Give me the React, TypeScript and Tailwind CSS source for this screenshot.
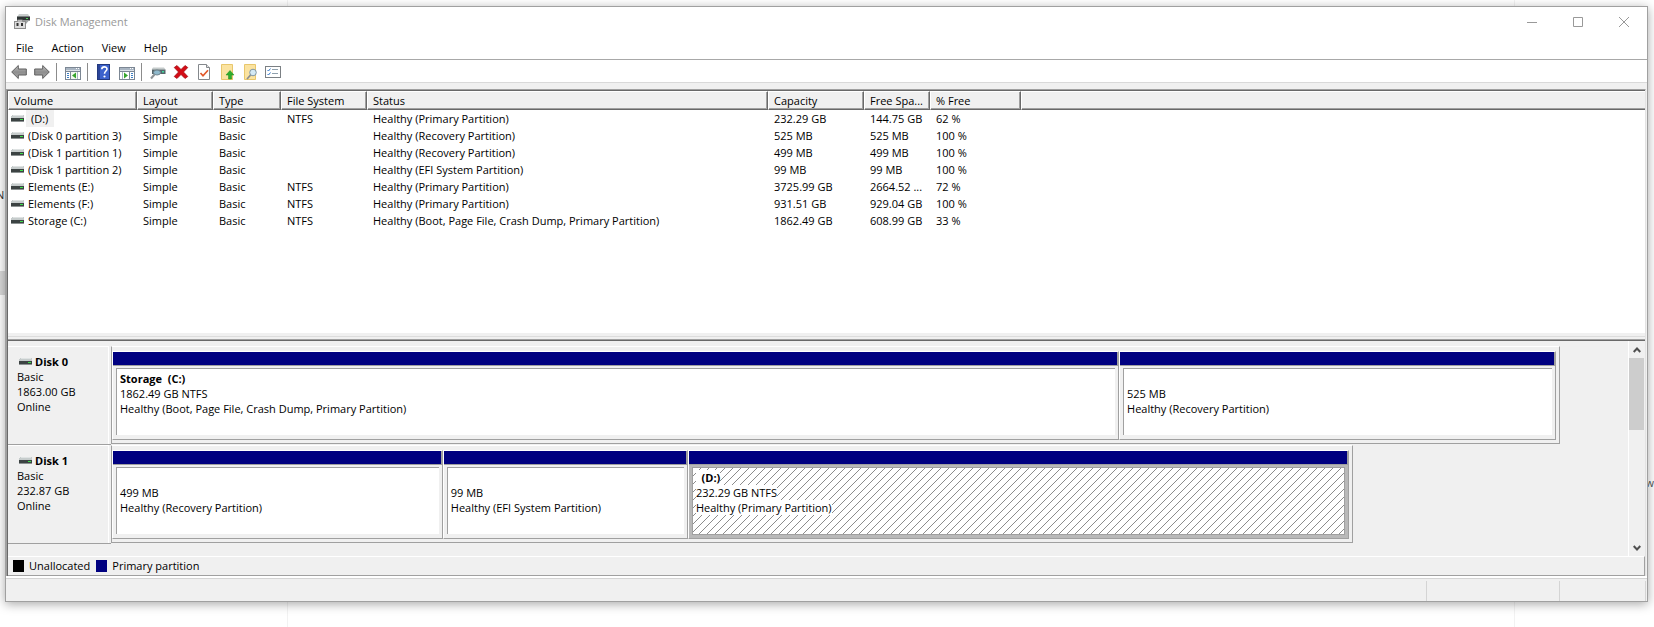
import type { ReactNode } from 'react';

type Volume = {
  name: string;
  layout: string;
  type: string;
  fs: string;
  status: string;
  capacity: string;
  free: string;
  percent: string;
  selected?: boolean;
};

type Partition = {
  id: string;
  label?: string;
  size: string;
  status: string;
  weight: number;
  selected?: boolean;
};

type Disk = {
  name: string;
  type: string;
  size: string;
  state: string;
  width: number;
  partitions: Partition[];
};

const menus = ['File', 'Action', 'View', 'Help'];

const columns: { label: string; className: string }[] = [
  { label: 'Volume', className: 'w-[129px]' },
  { label: 'Layout', className: 'w-[76px]' },
  { label: 'Type', className: 'w-[68px]' },
  { label: 'File System', className: 'w-[86px]' },
  { label: 'Status', className: 'w-[401px]' },
  { label: 'Capacity', className: 'w-[96px]' },
  { label: 'Free Spa...', className: 'w-[66px]' },
  { label: '% Free', className: 'w-[91px]' },
];

const volumes: Volume[] = [
  { name: '(D:)', layout: 'Simple', type: 'Basic', fs: 'NTFS', status: 'Healthy (Primary Partition)', capacity: '232.29 GB', free: '144.75 GB', percent: '62 %', selected: true },
  { name: '(Disk 0 partition 3)', layout: 'Simple', type: 'Basic', fs: '', status: 'Healthy (Recovery Partition)', capacity: '525 MB', free: '525 MB', percent: '100 %' },
  { name: '(Disk 1 partition 1)', layout: 'Simple', type: 'Basic', fs: '', status: 'Healthy (Recovery Partition)', capacity: '499 MB', free: '499 MB', percent: '100 %' },
  { name: '(Disk 1 partition 2)', layout: 'Simple', type: 'Basic', fs: '', status: 'Healthy (EFI System Partition)', capacity: '99 MB', free: '99 MB', percent: '100 %' },
  { name: 'Elements (E:)', layout: 'Simple', type: 'Basic', fs: 'NTFS', status: 'Healthy (Primary Partition)', capacity: '3725.99 GB', free: '2664.52 ...', percent: '72 %' },
  { name: 'Elements (F:)', layout: 'Simple', type: 'Basic', fs: 'NTFS', status: 'Healthy (Primary Partition)', capacity: '931.51 GB', free: '929.04 GB', percent: '100 %' },
  { name: 'Storage (C:)', layout: 'Simple', type: 'Basic', fs: 'NTFS', status: 'Healthy (Boot, Page File, Crash Dump, Primary Partition)', capacity: '1862.49 GB', free: '608.99 GB', percent: '33 %' },
];

const disks: Disk[] = [
  {
    name: 'Disk 0',
    type: 'Basic',
    size: '1863.00 GB',
    state: 'Online',
    width: 95.5,
    partitions: [
      { id: 'd0p2', label: 'Storage  (C:)', size: '1862.49 GB NTFS', status: 'Healthy (Boot, Page File, Crash Dump, Primary Partition)', weight: 1008 },
      { id: 'd0p3', size: '525 MB', status: 'Healthy (Recovery Partition)', weight: 436 },
    ],
  },
  {
    name: 'Disk 1',
    type: 'Basic',
    size: '232.87 GB',
    state: 'Online',
    width: 81.9,
    partitions: [
      { id: 'd1p1', size: '499 MB', status: 'Healthy (Recovery Partition)', weight: 330 },
      { id: 'd1p2', size: '99 MB', status: 'Healthy (EFI System Partition)', weight: 244 },
      { id: 'd1p3', label: '  (D:)', size: '232.29 GB NTFS', status: 'Healthy (Primary Partition)', weight: 662, selected: true },
    ],
  },
];

function DriveIcon() {
  return (
    <svg width="14" height="9" viewBox="0 0 14 9" className="shrink-0" aria-hidden="true" shapeRendering="crispEdges">
      <path d="M1 1h12v3H0V2h1z" fill="#c6cccc" />
      <rect x="2" y="1" width="10" height="1" fill="#dfe3e3" />
      <rect x="0" y="4" width="13" height="3" fill="#3c4343" />
      <rect x="0" y="7" width="13" height="1" fill="#8c9292" />
      <rect x="9" y="5" width="3" height="1" fill="#3ee04a" />
    </svg>
  );
}

function AppIcon() {
  return (
    <svg width="16" height="16" viewBox="0 0 16 16" aria-hidden="true">
      <path d="M5 0h9l2 3H3z" fill="#c9cdcd" />
      <rect x="3" y="2.500" width="13" height="4" fill="#2f3535" />
      <rect x="12" y="4" width="2" height="1" fill="#4fd05a" />
      <path d="M12 6.500h3L12 10z" fill="#a2a6a6" />
      <rect x="0.500" y="7.500" width="11" height="7" fill="#dcdcdc" stroke="#8d8d8d" />
      <path d="M3.500 7.500v-1.500h5v1.500" fill="#e4e4e4" stroke="#8d8d8d" />
      <rect x="2.500" y="9" width="2" height="3" fill="#333" />
      <rect x="7" y="9" width="2" height="3" fill="#333" />
    </svg>
  );
}

function BackIcon() {
  return (
    <svg width="16" height="16" viewBox="0 0 16 16" aria-hidden="true">
      <defs>
        <linearGradient id="arrow" x1="0" y1="0" x2="0" y2="1">
          <stop offset="0" stopColor="#c2c2c2" />
          <stop offset="0.5" stopColor="#8e8e8e" />
          <stop offset="1" stopColor="#a8a8a8" />
        </linearGradient>
      </defs>
      <path d="M0.700 8L7.300 1.500v3.500h8v6h-8v3.500z" fill="url(#arrow)" stroke="#5e5e5e" strokeLinejoin="round" />
    </svg>
  );
}

function ForwardIcon() {
  return (
    <svg width="16" height="16" viewBox="0 0 16 16" aria-hidden="true">
      <path d="M15.300 8L8.700 1.500v3.500h-8v6h8v3.500z" fill="url(#arrow)" stroke="#5e5e5e" strokeLinejoin="round" />
    </svg>
  );
}

// Window with a side pane; the green arrow points to the pane it toggles.
function PaneIcon({ side }: { side: 'left' | 'right' }) {
  return (
    <svg width="16" height="16" viewBox="0 0 16 16" aria-hidden="true" shapeRendering="crispEdges">
      <rect x="0.500" y="3.500" width="15" height="12" fill="#fff" stroke="#7c8794" />
      <rect x="1" y="4" width="14" height="2" fill="#a9b5c2" />
      <rect x="11" y="4" width="1" height="1" fill="#fff" />
      <rect x="13" y="4" width="1" height="1" fill="#fff" />
      <rect x="1" y="6" width="14" height="1" fill="#dde2e8" />
      <rect x="1" y="7" width="14" height="1" fill="#7c8794" />
      {side === 'left' ? (
        <>
          <rect x="5" y="8" width="1" height="7" fill="#7c8794" />
          <path d="M2 9h2v1H2zM2 11h2v1H2zM2 13h2v1H2z" fill="#3d7fc4" />
          <rect x="6" y="8" width="6" height="7" fill="#f3faf0" />
          <rect x="12" y="8" width="1" height="7" fill="#a9b5c2" />
          <path d="M11 8.500v6L7 11.500z" fill="#35a52c" shapeRendering="auto" />
        </>
      ) : (
        <>
          <rect x="10" y="8" width="1" height="7" fill="#7c8794" />
          <path d="M12 9h2v1h-2zM12 11h2v1h-2zM12 13h2v1h-2z" fill="#3d7fc4" />
          <rect x="3" y="8" width="1" height="7" fill="#a9b5c2" />
          <path d="M5 8.500v6l4-3z" fill="#35a52c" shapeRendering="auto" />
        </>
      )}
    </svg>
  );
}

function HelpIcon() {
  return (
    <svg width="16" height="16" viewBox="0 0 16 16" aria-hidden="true">
      <rect x="1.500" y="0.500" width="12" height="15" fill="#3c62cc" stroke="#23397f" />
      <rect x="2" y="1" width="2" height="14" fill="#2b4499" />
      <path d="M5.800 5.300C5.800 2 11 2.200 11 5c0 2-2.500 2.200-2.500 4.800" fill="none" stroke="#fff" strokeWidth="1.600" />
      <circle cx="8.500" cy="12.500" r="1.100" fill="#fff" />
    </svg>
  );
}

function RescanIcon() {
  return (
    <svg width="16" height="16" viewBox="0 0 16 16" aria-hidden="true">
      <path d="M3 3.500h11l1.500 2h-14z" fill="#c6cccc" />
      <rect x="2" y="5.500" width="13.500" height="4.500" fill="#56666b" />
      <rect x="12" y="7" width="2" height="1.500" fill="#41d9a0" />
      <path d="M1 14.500l3.500-4" stroke="#8e9396" strokeWidth="2" />
      <ellipse cx="7" cy="8.500" rx="3.500" ry="2.500" fill="#8fb9cc" stroke="#73868f" />
    </svg>
  );
}

function DeleteIcon() {
  return (
    <svg width="16" height="16" viewBox="0 0 16 16" aria-hidden="true">
      <path d="M4 1.500L8 5.500l4-4 2.800 2L10.500 8l4.300 4.500-2.800 2L8 10.500l-4 4-2.800-2L5.500 8 1.200 3.500z" fill="#d40c16" stroke="#9c0810" strokeWidth="0.700" />
    </svg>
  );
}

function PropertiesIcon() {
  return (
    <svg width="16" height="16" viewBox="0 0 16 16" aria-hidden="true">
      <path d="M2.500 0.500h8l3 3v12h-11z" fill="#fff" stroke="#84888c" />
      <path d="M10.500 0.500v3h3" fill="#e3e3e3" stroke="#84888c" />
      <path d="M4.500 9l2.500 2.800 5-5.500" fill="none" stroke="#e2592b" strokeWidth="1.700" />
    </svg>
  );
}

function FolderUpIcon() {
  return (
    <svg width="16" height="16" viewBox="0 0 16 16" aria-hidden="true">
      <path d="M2.500 0.500h11v15h-11z" fill="#fbe3a0" stroke="#e8c76c" />
      <path d="M11 13.500h3v2h-3z" fill="#e8c766" />
      <path d="M11 6.500l4 4.500h-2.500v4h-3v-4H7z" fill="#2fae2c" stroke="#1f8a1f" strokeWidth="0.500" />
    </svg>
  );
}

function FolderSearchIcon() {
  return (
    <svg width="16" height="16" viewBox="0 0 16 16" aria-hidden="true">
      <path d="M2.500 0.500h11v15h-11z" fill="#fbe3a0" stroke="#e8c76c" />
      <path d="M5 15l4-4.500" stroke="#8c8f91" strokeWidth="1.800" />
      <circle cx="11" cy="8.500" r="3.300" fill="#d3e9f5" stroke="#8196a3" />
    </svg>
  );
}

function SettingsIcon() {
  return (
    <svg width="16" height="16" viewBox="0 0 16 16" aria-hidden="true">
      <rect x="0.500" y="2.500" width="15" height="11" fill="#fff" stroke="#7b8084" />
      <path d="M2.500 6l1 1 2-2.500M2.500 10l1 1 2-2.500" fill="none" stroke="#3477c9" />
      <path d="M7 5.500h6M7 9.500h6" stroke="#8fa0ad" />
    </svg>
  );
}

function ToolButton({ label, children }: { label: string; children: ReactNode }) {
  return (
    <button type="button" aria-label={label} className="flex h-5 w-[23px] shrink-0 items-center pl-[3px]">
      {children}
    </button>
  );
}

function ToolSeparator() {
  return <span className="mr-[5px] ml-0.5 h-[18px] w-px shrink-0 bg-[#8c8c8c]"></span>;
}

function TitleBar() {
  return (
    <header className="flex h-[30px] items-center bg-white pl-2">
      <AppIcon />
      <h1 className="ml-[5px] flex-1 leading-4 text-[#999999]">Disk Management</h1>
      <button type="button" aria-label="Minimize" className="flex h-7 w-[46px] items-center justify-center">
        <svg width="10" height="10" viewBox="0 0 10 10">
          <path d="M0 5.500h10" stroke="#999" />
        </svg>
      </button>
      <button type="button" aria-label="Maximize" className="flex h-7 w-[46px] items-center justify-center">
        <svg width="10" height="10" viewBox="0 0 10 10">
          <path d="M0.500 0.500h9v9h-9z" fill="none" stroke="#999" />
        </svg>
      </button>
      <button type="button" aria-label="Close" className="flex h-7 w-[46px] items-center justify-center">
        <svg width="10" height="10" viewBox="0 0 10 10">
          <path d="M0 0l10 10M10 0L0 10" stroke="#999" />
        </svg>
      </button>
    </header>
  );
}

function VolumeTable() {
  return (
    <table className="w-full table-fixed border-separate border-spacing-0 text-left">
      <thead>
        <tr>
          {columns.map((col) => (
            <th
              key={col.label}
              scope="col"
              className={`${col.className} h-[19px] truncate border border-t-white border-r-[#696969] border-b-[#696969] border-l-white bg-[#f0f0f0] pl-[5px] text-left leading-4 font-normal shadow-[inset_-1px_-1px_0_#a0a0a0]`}
            >
              {col.label}
            </th>
          ))}
          <td className="h-[19px] border-t border-b border-l border-t-white border-b-[#696969] border-l-white bg-[#f0f0f0] shadow-[inset_0_-1px_0_#a0a0a0]"></td>
        </tr>
      </thead>
      <tbody>
        {volumes.map((v) => (
          <tr key={v.name} className="h-[17px] leading-[17px] whitespace-nowrap">
            <td>
              <div className="flex items-center pl-[3px]">
                <DriveIcon />
                <span className={v.selected ? 'ml-px bg-[#f0f0f0] pr-1.5 pl-[5px]' : 'pl-[3px]'}>{v.name}</span>
              </div>
            </td>
            <td className="pl-1.5">{v.layout}</td>
            <td className="pl-1.5">{v.type}</td>
            <td className="pl-1.5">{v.fs}</td>
            <td className="pl-1.5">{v.status}</td>
            <td className="pl-1.5">{v.capacity}</td>
            <td className="pl-1.5">{v.free}</td>
            <td className="pl-1.5">{v.percent}</td>
            <td></td>
          </tr>
        ))}
      </tbody>
    </table>
  );
}

function Hatch() {
  return (
    <svg className="absolute inset-0 h-full w-full" aria-hidden="true">
      <defs>
        <pattern id="hatch" width="8" height="8" patternUnits="userSpaceOnUse">
          <path
            d="M0 7h1v1H0zM1 6h1v1H1zM2 5h1v1H2zM3 4h1v1H3zM4 3h1v1H4zM5 2h1v1H5zM6 1h1v1H6zM7 0h1v1H7z"
            fill="#8c8c8c"
            shapeRendering="crispEdges"
          />
        </pattern>
      </defs>
      <rect width="100%" height="100%" fill="url(#hatch)" />
    </svg>
  );
}

function PartitionBox({ partition }: { partition: Partition }) {
  const { label, size, status, selected } = partition;

  return (
    <div
      className="flex min-w-0 basis-0 flex-col border border-t-white border-r-[#a0a0a0] border-b-[#a0a0a0] border-l-white"
      style={{ flexGrow: partition.weight }}
    >
      <div className="h-3.5 border-r border-b border-[#a0a0a0] bg-[#000080]"></div>
      <div className={`flex flex-1 px-[3px] pt-0.5 ${selected ? 'bg-[#b9b9b9] pb-[3px]' : 'pb-1'}`}>
        <div
          className={`relative flex-1 overflow-hidden border-[#a0a0a0] bg-white pt-0.5 pl-[3px] leading-[15px] ${
            selected ? 'border' : 'border-t border-l'
          }`}
        >
          {selected && <Hatch />}
          <div className="relative flex flex-col items-start whitespace-pre">
            <strong className="h-[15px] bg-white font-bold">{label}</strong>
            <span className="bg-white">{size}</span>
            <span className="bg-white">{status}</span>
          </div>
        </div>
      </div>
    </div>
  );
}

function DiskRow({ disk }: { disk: Disk }) {
  return (
    <section className="flex h-[99px]" aria-label={disk.name}>
      <div className="w-[103px] shrink-0 border-b border-[#a0a0a0]">
        <div className="h-full w-[101px] border-t border-r border-white pt-[7px] pl-[9px] leading-[15px]">
          <div className="flex items-center gap-0.5 pl-0.5">
            <DriveIcon />
            <strong className="font-bold">{disk.name}</strong>
          </div>
          <p>{disk.type}</p>
          <p>{disk.size}</p>
          <p>{disk.state}</p>
        </div>
      </div>
      <div className="min-w-0 flex-1">
        <div
          className="flex h-[98px] border border-t-white border-r-[#a0a0a0] border-b-[#a0a0a0] border-l-[#a0a0a0] pt-1 pr-[3px] pb-[3px]"
          style={{ width: `${disk.width}%` }}
        >
          {disk.partitions.map((p) => (
            <PartitionBox key={p.id} partition={p} />
          ))}
        </div>
      </div>
    </section>
  );
}

function ScrollBar() {
  return (
    <div className="flex w-[17px] shrink-0 flex-col border-l border-white bg-[#f0f0f0]">
      <button type="button" aria-label="Scroll up" className="flex h-[17px] items-center justify-center">
        <svg width="8" height="6" viewBox="0 0 8 6">
          <path d="M0.700 5L4 1.500 7.300 5" fill="none" stroke="#505050" strokeWidth="2" />
        </svg>
      </button>
      <div className="h-[72px] w-[15px] bg-[#cdcdcd]"></div>
      <div className="flex-1"></div>
      <button type="button" aria-label="Scroll down" className="flex h-[17px] items-center justify-center">
        <svg width="8" height="6" viewBox="0 0 8 6">
          <path d="M0.700 1L4 4.500 7.300 1" fill="none" stroke="#505050" strokeWidth="2" />
        </svg>
      </button>
    </div>
  );
}

export default function App() {
  return (
    <div className="relative flex h-screen min-h-[520px] flex-col overflow-hidden bg-white pt-1.5 pr-1.5 pb-[25px] pl-[5px] font-['Open_Sans','Noto_Sans',sans-serif] text-[11px] text-black">
      {/* Whatever is open behind the window */}
      <div className="absolute inset-0" aria-hidden="true">
        <div className="absolute inset-y-0 left-[287px] w-px bg-[#f2f2f2]"></div>
        <div className="absolute inset-y-0 right-[139px] w-px bg-[#f2f2f2]"></div>
        <div className="absolute top-[271px] left-0 h-6 w-[5px] bg-[#dadada]"></div>
        <span className="absolute top-[187px] -left-1 leading-4 text-[#333333]">N</span>
        <span className="absolute top-[475px] right-0 leading-4 text-[#555555]">w</span>
      </div>

      <main className="relative flex flex-1 flex-col border border-[#a0a0a0] bg-[#f0f0f0] shadow-[0_2px_10px_rgba(0,0,0,0.35)]">
        <TitleBar />

        <nav className="flex h-[23px] items-center gap-0.5 border-b border-[#a8a8a8] bg-white pl-0.5 leading-4">
          {menus.map((menu) => (
            <button key={menu} type="button" className="px-2">
              {menu}
            </button>
          ))}
        </nav>

        <div className="flex h-[23px] items-center border-b border-[#d9d9d9] bg-white pt-0.5 pl-0.5" role="toolbar">
          <ToolButton label="Back"><BackIcon /></ToolButton>
          <ToolButton label="Forward"><ForwardIcon /></ToolButton>
          <ToolSeparator />
          <ToolButton label="Show/Hide Console Tree"><PaneIcon side="left" /></ToolButton>
          <ToolSeparator />
          <ToolButton label="Help"><HelpIcon /></ToolButton>
          <ToolButton label="Show/Hide Action Pane"><PaneIcon side="right" /></ToolButton>
          <ToolSeparator />
          <ToolButton label="Rescan Disks"><RescanIcon /></ToolButton>
          <ToolButton label="Delete"><DeleteIcon /></ToolButton>
          <ToolButton label="Properties"><PropertiesIcon /></ToolButton>
          <ToolButton label="Open"><FolderUpIcon /></ToolButton>
          <ToolButton label="Explore"><FolderSearchIcon /></ToolButton>
          <ToolButton label="Settings"><SettingsIcon /></ToolButton>
        </div>

        <div className="mt-1.5 mr-px flex flex-1 flex-col border-t border-r border-l border-t-[#a0a0a0] border-r-[#e3e3e3] border-l-[#a0a0a0]">
          <div className="flex flex-1 flex-col border-t border-l border-[#696969]">
            <div className="flex-1 overflow-hidden bg-white">
              <VolumeTable />
            </div>
            <div className="h-2 border-b border-[#696969] bg-[#f0f0f0] pt-[3px] shadow-[inset_0_-1px_0_#a0a0a0]">
              <div className="h-px bg-[#dcdcdc]"></div>
            </div>

            <div className="flex">
              <div className="min-w-0 flex-1 pt-[5px] pb-3">
                {disks.map((disk) => (
                  <DiskRow key={disk.name} disk={disk} />
                ))}
              </div>
              <ScrollBar />
            </div>

            <div className="flex h-5 items-center border border-l-0 border-t-white border-r-[#a0a0a0] border-b-[#a0a0a0] pl-[5px] leading-4">
              <span className="mr-[5px] h-3 w-[11px] bg-black"></span>
              Unallocated
              <span className="mr-[5px] ml-1.5 h-3 w-[11px] bg-[#000080]"></span>
              Primary partition
            </div>
          </div>
        </div>

        <footer className="flex h-[25px] border-t-2 border-white">
          <div className="flex flex-1 border-t border-[#d4d4d4] pt-0.5">
            <div className="flex-1 border-r border-[#d4d4d4]"></div>
            <div className="w-[133px] border-r border-[#d4d4d4]"></div>
            <div className="mr-px w-[86px] border-r border-[#d4d4d4]"></div>
          </div>
        </footer>
      </main>
    </div>
  );
}
